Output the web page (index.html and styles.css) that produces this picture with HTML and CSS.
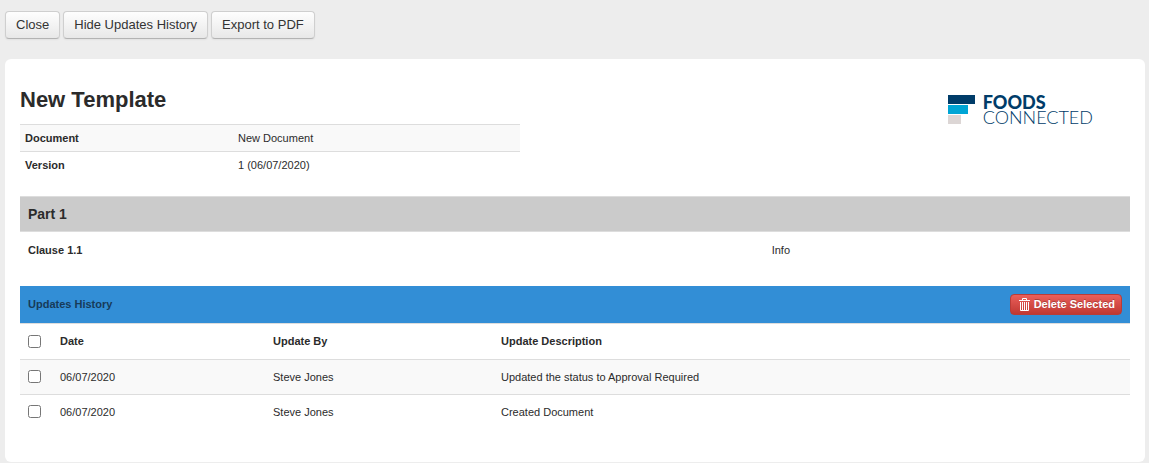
FILE: index.html
```html
<!DOCTYPE html>
<html lang="en">
<head>
<meta charset="utf-8">
<meta name="viewport" content="width=device-width, initial-scale=1">
<title>New Template</title>
<link rel="stylesheet" href="styles.css">
</head>
<body>
<nav class="toolbar">
  <button class="btn" type="button">Close</button>
  <button class="btn" type="button">Hide Updates History</button>
  <button class="btn" type="button">Export to PDF</button>
</nav>
<main class="panel">
  <header class="intro">
    <div class="summary">
      <h1 class="title">New Template</h1>
      <table class="meta">
        <tbody>
          <tr><th scope="row">Document</th><td>New Document</td></tr>
          <tr><th scope="row">Version</th><td>1 (06/07/2020)</td></tr>
        </tbody>
      </table>
    </div>
    <div class="logo">
      <svg class="logo-mark" viewBox="0 0 27 29" aria-hidden="true">
        <rect width="27" height="9" fill="#003c69"/>
        <rect y="10" width="20" height="9" fill="#00a5d5"/>
        <rect y="20" width="13" height="9" fill="#dcd6d5"/>
      </svg>
      <div class="logo-text">
        <span class="logo-foods">FOODS</span>
        <span class="logo-connected">CONNECTED</span>
      </div>
    </div>
  </header>

  <section class="part">
    <h2 class="part-title">Part 1</h2>
    <div class="clause">
      <strong class="clause-name">Clause 1.1</strong>
      <span class="clause-info">Info</span>
    </div>
  </section>

  <section class="history">
    <div class="history-bar">
      <h2 class="history-title">Updates History</h2>
      <button class="btn-danger" type="button">
        <svg class="trash" viewBox="0 0 11 13" aria-hidden="true">
          <path d="M3.5 2V.5h4V2M0 2.5h11M1.5 4v8.5h8V4M3.5 4v8M5.5 4v8M7.5 4v8" fill="none" stroke="#fff"/>
        </svg>
        Delete Selected
      </button>
    </div>
    <table class="updates">
      <thead>
        <tr>
          <th class="col-check"><input class="check" type="checkbox" aria-label="Select all updates"></th>
          <th class="col-date" scope="col">Date</th>
          <th class="col-by" scope="col">Update By</th>
          <th scope="col">Update Description</th>
        </tr>
      </thead>
      <tbody>
        <tr class="shaded">
          <td><input class="check" type="checkbox" aria-label="Select status update"></td>
          <td>06/07/2020</td>
          <td>Steve Jones</td>
          <td>Updated the status to Approval Required</td>
        </tr>
        <tr>
          <td><input class="check" type="checkbox" aria-label="Select document creation"></td>
          <td>06/07/2020</td>
          <td>Steve Jones</td>
          <td>Created Document</td>
        </tr>
      </tbody>
    </table>
  </section>
</main>
</body>
</html>
```

FILE: styles.css
```css
* {
  box-sizing: border-box;
}

body {
  margin: 0;
  padding: 11px 4px 1px 5px;
  background: #ededed;
  color: #2b2b2b;
  font: 11px/18px "Liberation Sans", Arial, sans-serif;
}

table {
  width: 100%;
  border-collapse: collapse;
  table-layout: fixed;
}

th,
td {
  text-align: left;
}

.toolbar {
  display: flex;
  gap: 3px;
  margin-bottom: 20px;
}

.btn {
  height: 28px;
  padding: 0 10px;
  border: 1px solid #cfcfcf;
  border-bottom-color: #b3b3b3;
  border-radius: 4px;
  background: linear-gradient(#fefefe, #e8e8e8);
  box-shadow: 0 1px 2px rgba(0, 0, 0, 0.05);
  color: #333;
  font: 13px/20px "Liberation Sans", Arial, sans-serif;
}

.panel {
  padding: 26px 15px 33px;
  border-radius: 6px;
  background: #fff;
}

.intro {
  display: flex;
  justify-content: space-between;
  margin-bottom: 17px;
}

.summary {
  flex: 0 1 500px;
}

.title {
  margin: 0 0 9px;
  font-size: 22px;
  line-height: 30px;
}

.meta th,
.meta td {
  height: 27px;
  padding: 4px 5px;
  border-top: 1px solid #ddd;
}

.meta tr:first-child {
  background: #f9f9f9;
}

.meta th {
  width: 213px;
}

.logo {
  display: flex;
  align-items: flex-start;
  gap: 8px;
  padding: 10px 37px 0 0;
}

.logo-mark {
  width: 27px;
  height: 29px;
}

.logo-text {
  display: flex;
  flex-direction: column;
  color: #003c69;
  font-family: Lato, sans-serif;
  font-size: 18px;
  line-height: 15px;
}

.logo-foods {
  font-weight: 900;
}

.logo-connected {
  font-weight: 300;
}

.part-title {
  margin: 0;
  padding: 8px;
  border: solid #ddd;
  border-width: 1px 0;
  background: #cbcbcb;
  font-size: 14px;
  line-height: 18px;
}

.clause {
  display: grid;
  grid-template-columns: 67% 1fr;
  padding: 9px 0;
  margin-bottom: 18px;
}

.clause-name,
.clause-info {
  padding: 0 8px;
}

.history-bar {
  display: flex;
  align-items: center;
  justify-content: space-between;
  height: 37px;
  padding: 0 8px;
  background: #328ed6;
}

.history-title {
  margin: 0;
  color: #173b59;
  font-size: 11px;
}

.btn-danger {
  display: flex;
  align-items: center;
  gap: 4px;
  height: 21px;
  padding: 0 6px 0 8px;
  border: 1px solid #b93c37;
  border-radius: 4px;
  background: linear-gradient(#ea5f5a, #c03832);
  color: #fff;
  font: bold 11px/18px "Liberation Sans", Arial, sans-serif;
  text-shadow: 0 -1px 0 rgba(0, 0, 0, 0.25);
}

.trash {
  width: 11px;
  height: 13px;
}

.updates th,
.updates td {
  height: 35px;
  padding: 8px;
  border-top: 1px solid #ddd;
}

.updates thead th {
  height: 36px;
}

.updates .col-check {
  width: 32px;
}

.updates .col-date {
  width: 213px;
}

.updates .col-by {
  width: 228px;
}

.shaded {
  background: #f9f9f9;
}

.check {
  display: block;
  width: 13px;
  height: 13px;
  margin: 0;
}
```
